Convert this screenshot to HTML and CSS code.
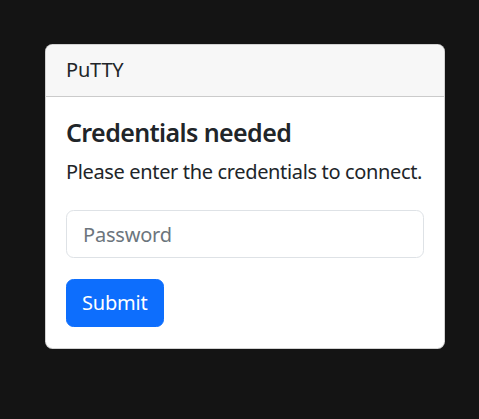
FILE: index.html
```html
<!DOCTYPE html>
<html>
<head>
<meta charset="utf-8">
<link rel="stylesheet" href="styles.css">
</head>
<body>
<div class="card">
  <div class="card-header">PuTTY</div>
  <div class="card-body">
    <h5 class="card-title">Credentials needed</h5>
    <p class="card-text">Please enter the credentials to connect.</p>
    <input class="form-control" type="password" placeholder="Password">
    <button class="btn">Submit</button>
  </div>
</div>
</body>
</html>
```
FILE: styles.css
```css
html { font-size: 20px; }
body {
  margin: 0;
  background: #141414;
  font-family: "Noto Sans", "Open Sans", sans-serif;
  color: #212529;
  padding: 44px 0 0 45px;
}
.card {
  width: 400px;
  box-sizing: border-box;
  background: #fff;
  border: 1px solid rgba(0,0,0,.175);
  border-radius: 7.5px;
  overflow: hidden;
}
.card-header {
  padding: 10px 20px 11px;
  line-height: 30px;
  font-size: 20px;
  letter-spacing: -0.2px;
  background: #f7f7f7;
  border-bottom: 1px solid rgba(0,0,0,.175);
}
.card-body {
  padding: 20px 20px 21px;
  display: flex;
  flex-direction: column;
  align-items: flex-start;
}
.card-title {
  margin: 0 0 10px;
  font-size: 25px;
  font-weight: 600;
  line-height: 30px;
  letter-spacing: -0.6px;
}
.card-text {
  margin: 0 0 23px;
  font-size: 20px;
  line-height: 30px;
  letter-spacing: -0.35px;
  white-space: nowrap;
}
.form-control {
  box-sizing: border-box;
  width: 100%;
  height: 48px;
  padding: 7.5px 15px 7.5px 16px;
  font: inherit;
  font-size: 20px;
  letter-spacing: -0.2px;
  color: #212529;
  border: 1px solid #dee2e6;
  border-radius: 7.5px;
  margin: 0 0 21px;
  outline: none;
}
.form-control::placeholder { color: #6c757d; }
.btn {
  height: 48px;
  padding: 7.5px 15px;
  font: inherit;
  font-size: 20px;
  line-height: 30px;
  letter-spacing: -0.2px;
  color: #fff;
  background: #0d6efd;
  border: 1px solid #0d6efd;
  border-radius: 7.5px;
}
```
